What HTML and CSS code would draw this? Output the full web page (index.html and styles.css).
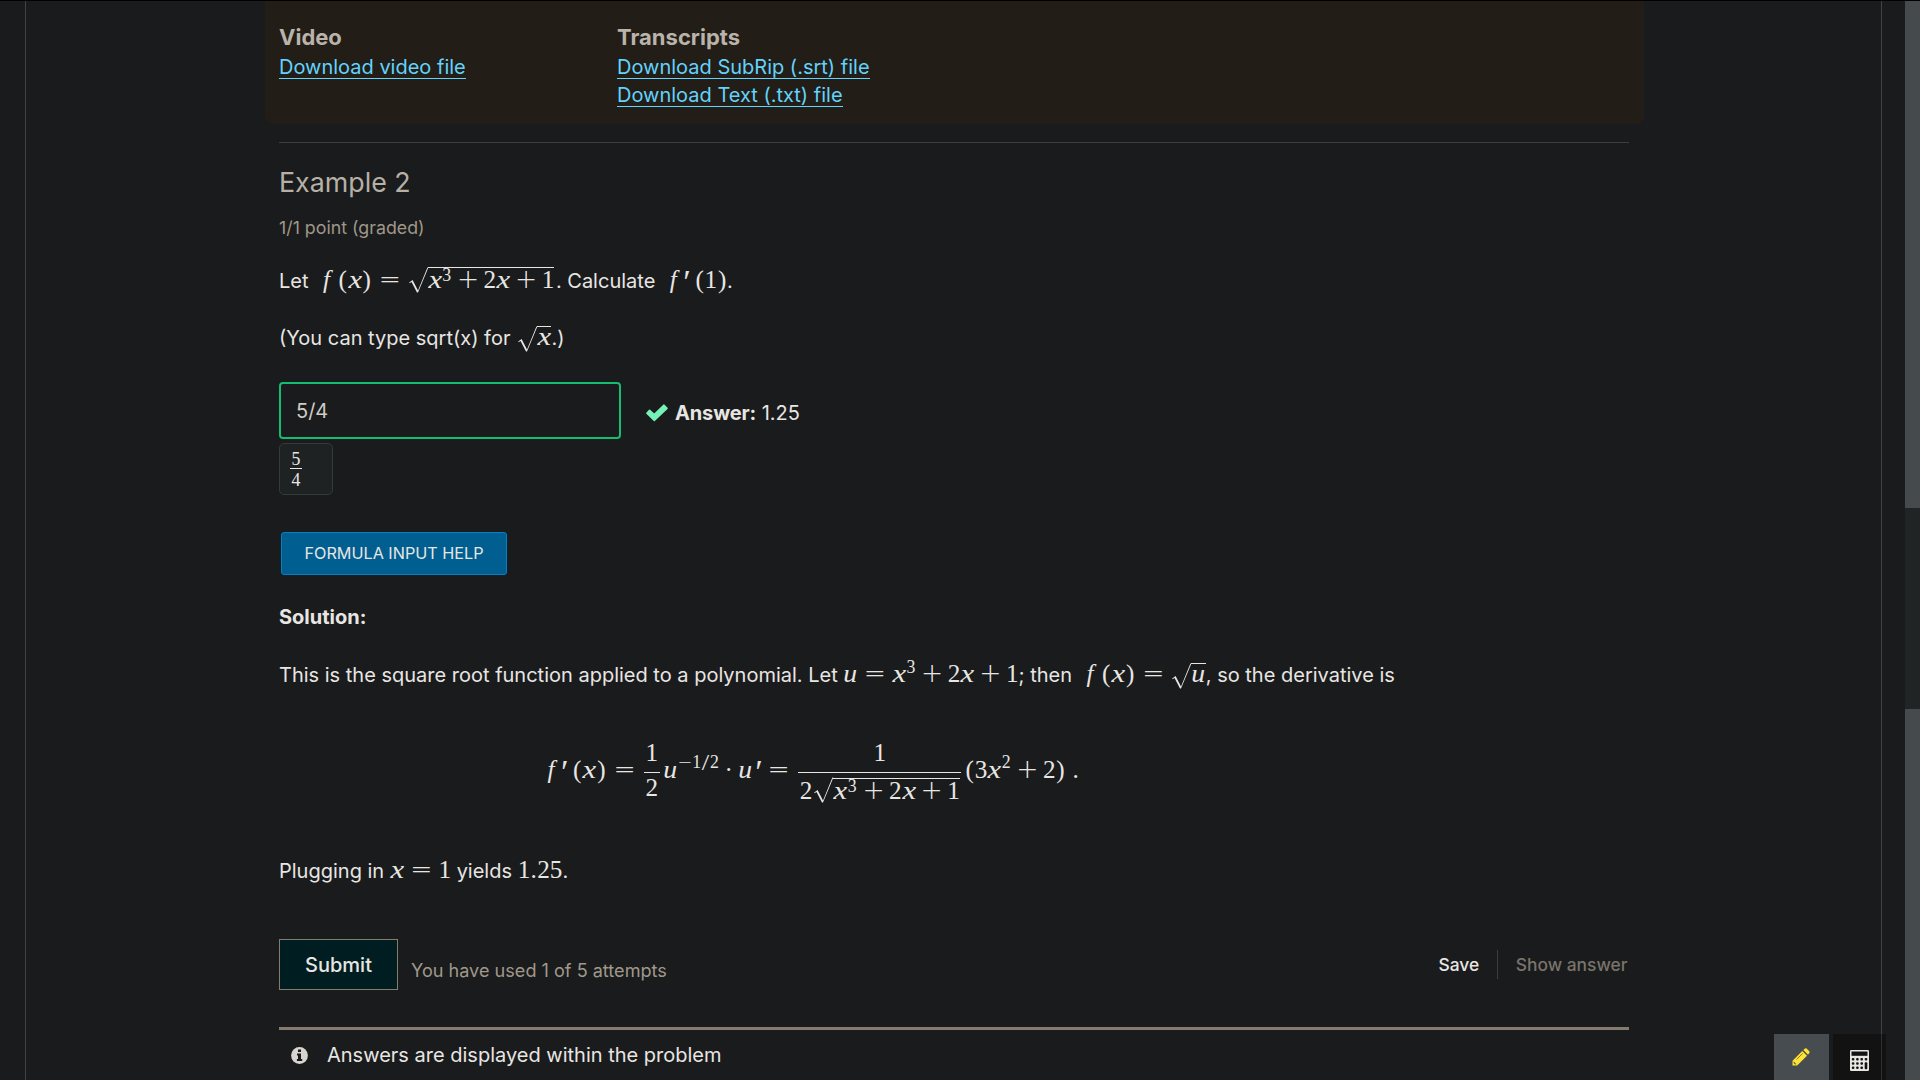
FILE: index.html
```html
<!DOCTYPE html>
<html lang="en">
<head>
<meta charset="utf-8">
<title>Example 2</title>
<link rel="stylesheet" href="styles.css">
</head>
<body>
<div class="viewport">
  <main class="page">
    <section class="downloads">
      <div class="download-group">
        <h3>Video</h3>
        <a href="#">Download video file</a>
      </div>
      <div class="download-group">
        <h3>Transcripts</h3>
        <a href="#">Download SubRip (.srt) file</a>
        <a href="#">Download Text (.txt) file</a>
      </div>
    </section>

    <section class="problem">
      <h2>Example 2</h2>
      <div class="progress">1/1 point (graded)</div>

      <p class="line statement">Let <span class="m lead trail"><i class="f">f</i><span class="par thin">(</span><i class="x">x</i><span class="par">)</span><span class="rel">=</span><svg class="surd" viewBox="0 0 21 26"><path d="M2.2 15.6 5.6 13 11 23.6 20.4.5H21.4L11 25.6H10L4.5 15 2.6 16.3Z"/></svg><span class="rad"><i class="x">x</i><sup>3</sup><span class="bin">+</span>2<i class="x">x</i><span class="bin">+</span>1</span></span>. Calculate <span class="m lead"><i class="f">f</i><span class="prime">′</span><span class="par thin">(</span>1<span class="par">)</span></span>.</p>

      <p class="line hint">(You can type sqrt(x) for <span class="m"><svg class="surd low" viewBox="0 0 21 26"><path d="M2.2 15.6 5.6 13 11 23.6 20.4.5H21.4L11 25.6H10L4.5 15 2.6 16.3Z"/></svg><span class="rad short"><i class="x">x</i></span></span>.)</p>

      <div class="answer-row">
        <div class="answer-input">5/4</div>
        <svg class="check" viewBox="0 0 22 17"><path d="M3.6 6.3 8.2 10.6 18 1.2 21 4.3 8.3 16.3.9 9.2Z"/></svg>
        <span class="answer"><b>Answer:</b> 1.25</span>
      </div>
      <div class="preview"><span class="m small-frac"><span>5</span><span>4</span></span></div>

      <button class="help">FORMULA INPUT HELP</button>

      <p class="line solution"><b>Solution:</b></p>
      <p class="line explain">This is the square root function applied to a polynomial. Let <span class="m"><i class="u">u</i><span class="rel">=</span><i class="x">x</i><sup class="high">3</sup><span class="bin">+</span>2<i class="x">x</i><span class="bin">+</span>1</span>; then <span class="m lead"><i class="f">f</i><span class="par thin">(</span><i class="x">x</i><span class="par">)</span><span class="rel">=</span><svg class="surd low" viewBox="0 0 21 26"><path d="M2.2 15.6 5.6 13 11 23.6 20.4.5H21.4L11 25.6H10L4.5 15 2.6 16.3Z"/></svg><span class="rad short"><i class="u">u</i></span></span>, so the derivative is</p>

      <div class="m display"><i class="f">f</i><span class="prime">′</span><span class="par thin">(</span><i class="x">x</i><span class="par">)</span><span class="rel">=</span><span class="frac"><span class="num">1</span><span class="den">2</span></span><i class="u">u</i><sup class="high"><span class="minus">−</span>1<span class="slash">/</span>2</sup><span class="dot">·</span><i class="u">u</i><span class="prime">′</span><span class="rel">=</span><span class="frac"><span class="num">1</span><span class="den root">2<svg class="surd" viewBox="0 0 21 26"><path d="M2.2 15.6 5.6 13 11 23.6 20.4.5H21.4L11 25.6H10L4.5 15 2.6 16.3Z"/></svg><span class="rad"><i class="x">x</i><sup>3</sup><span class="bin">+</span>2<i class="x">x</i><span class="bin">+</span>1</span></span></span><span class="par">(</span>3<i class="x">x</i><sup class="high">2</sup><span class="bin">+</span>2<span class="par">)</span><span class="stop">.</span></div>

      <p class="line result">Plugging in <span class="m"><i class="x">x</i><span class="rel">=</span>1</span> yields <span class="m">1<span class="point">.</span>25</span>.</p>

      <div class="actions">
        <button class="submit">Submit</button>
        <span class="attempts">You have used 1 of 5 attempts</span>
        <span class="save">Save</span>
        <span class="show">Show answer</span>
      </div>

      <div class="notice">
        <svg class="info" viewBox="0 0 17 17"><circle cx="8.5" cy="8.5" r="8.4"/><path d="M7 2.5H10V5H7ZM6 6.6H10V12H11.2V13.9H5.9V12H7V8.4H6Z"/></svg>
        <span>Answers are displayed within the problem</span>
      </div>
    </section>
  </main>
  <div class="scrollbar"><div class="thumb"></div></div>
</div>
<div class="tools">
  <div class="tool notes"><svg width="18" height="18" viewBox="0 0 18 18"><path fill="#fde334" d="M.5 17.5V12.8L10.3 3 15 7.7 5.2 17.5ZM11.3 2 13 .5Q13.8 0 14.6.6L17.3 3.3Q18 4.1 17.3 5L16 6.7Z"/><path fill="none" stroke="#7d7a3a" stroke-width="1" d="M4.6 11.4 10.6 5.4"/><path fill="#474c50" d="M1.6 13.6 4.4 16.2 3.4 16.6 1.6 14.9Z"/></svg></div>
  <div class="tool calc"><svg width="19" height="21" viewBox="0 0 19 21"><rect width="19" height="21" rx="1.3" fill="#e8e6e3"/><g fill="#111315"><rect x="1.5" y="1.5" width="16" height="4.3"/><rect x="1.8" y="8" width="2.6" height="2.6" rx="1"/><rect x="6.1" y="8" width="2.6" height="2.6" rx="1"/><rect x="10.4" y="8" width="2.6" height="2.6" rx="1"/><rect x="14.7" y="8" width="2.6" height="2.6" rx="1"/><rect x="1.8" y="12.2" width="2.6" height="2.6" rx="1"/><rect x="6.1" y="12.2" width="2.6" height="2.6" rx="1"/><rect x="10.4" y="12.2" width="2.6" height="2.6" rx="1"/><rect x="14.7" y="12.2" width="2.6" height="7" rx="1"/><rect x="1.8" y="16.5" width="2.6" height="2.6" rx="1"/><rect x="6.1" y="16.5" width="2.6" height="2.6" rx="1"/><rect x="10.4" y="16.5" width="2.6" height="2.6" rx="1"/></g></svg></div>
</div>
</body>
</html>
```
FILE: styles.css
```css
* { box-sizing: border-box; }
body {
  margin: 0;
  height: 1080px;
  overflow: hidden;
  background: #1a1b1c;
  color: #e8e6e3;
  font: 20px/30px Inter, "Liberation Sans", sans-serif;
}
h2, h3, p { margin: 0; }
button { font-family: inherit; color: inherit; padding: 0; }

.viewport {
  display: flex;
  height: 1080px;
  border-top: 1px solid #000;
}
.page {
  width: 1857px;
  margin-left: 25px;
  border: solid #414345;
  border-width: 0 1px;
}
.scrollbar {
  width: 15px;
  margin-left: auto;
  padding-top: 507px;
  background: #454a4d;
}
.thumb { height: 201px; background: #202425; }

/* Video downloads */
.downloads {
  display: flex;
  width: 1379px;
  height: 123px;
  margin-left: 239px;
  padding: 22px 14px 0;
  border-radius: 0 0 8px 8px;
  background: #221d17;
}
.download-group { width: 338px; }
.download-group h3 {
  height: 33px;
  font-size: 22px;
  line-height: 28px;
  color: #b9b3a9;
}
.download-group a {
  display: block;
  width: fit-content;
  height: 23px;
  margin-bottom: 5px;
  border-bottom: 1px solid #63d3fb;
  line-height: 22px;
  color: #63d3fb;
  text-decoration: none;
}

/* Problem */
.problem {
  display: flex;
  flex-direction: column;
  width: 1350px;
  margin: 18px 0 0 253px;
  border-top: 1px solid #3b3d3f;
}
.problem h2 {
  margin-top: 19px;
  height: 40px;
  font-size: 26.8px;
  line-height: 40px;
  font-weight: 400;
  color: #b6b0a6;
}
.progress {
  margin-top: 11px;
  font-size: 17.8px;
  height: 30px;
  color: #9f978a;
}
.line { height: 30px; white-space: nowrap; }
.statement { margin-top: 23px; }
.hint { margin-top: 27px; }

.answer-row {
  display: flex;
  height: 57px;
  margin-top: 29px;
}
.answer-input {
  width: 342px;
  border: 2px solid #14bd71;
  border-radius: 4px;
  padding: 12px 15px;
  color: #d0ccc6;
}
.check { width: 22px; height: 17px; margin: 22px 7px 0 25px; fill: #76f2b8; stroke: #76f2b8; stroke-width: 1.6; stroke-linejoin: round; overflow: visible; }
.answer { padding-top: 16px; }
.answer b { letter-spacing: -.15px; }
.preview {
  width: 54px;
  height: 52px;
  margin-top: 4px;
  padding: 6px 0 0 10px;
  border: 1px solid #34393a;
  border-radius: 5px;
  background: #1f2223;
}
.help {
  width: 226px;
  height: 43px;
  margin: 37px 0 0 2px;
  border: 1px solid #0080c9;
  border-radius: 3px;
  background: #005e91;
  padding-bottom: 2px;
  font-size: 16.2px;
  line-height: 38px;
  text-align: center;
}
.solution { margin-top: 27px; }
.explain { margin-top: 28px; }

/* Formulas */
.m {
  font: 25.2px/24px "Liberation Serif", "Times New Roman", serif;
  white-space: nowrap;
}
.line .m { line-height: 0; }
.m > span, .m > i, .rad > span, .rad > i { display: inline-block; }
.m i { text-align: center; }
.m .x, .m .u { width: .572em; transform: scaleX(1.22); }
.m .u { transform: scaleX(1.1); }
.m .f { width: .55em; text-align: center; }
.m .par { width: .389em; text-align: center; }
.m .thin { margin-left: .167em; }
.m .prime {
  width: 9.5px;
  font-size: 34px;
  font-style: italic;
  line-height: 0;
  text-align: center;
  vertical-align: -5px;
}
.m .prime + .thin { margin-left: .2em; }
.lead { margin-left: 5.5px; }
.trail { margin-right: 1.5px; }
.m .rel, .m .bin {
  width: 22.2px;
  font: 200 26.5px/0 "DejaVu Sans", sans-serif;
}
.m .rel { margin: 0 6px; }
.m .par + .rel { margin-left: 7px; }
.m .bin { margin: 0 4.5px; }
.m sup {
  display: inline-block;
  margin-right: .07em;
  font-size: 17.8px;
  line-height: 0;
  vertical-align: 7px;
}
.m sup.high { vertical-align: 9.5px; }
.minus { display: inline-block; font: 200 17.8px/0 "DejaVu Sans", sans-serif; width: .82em; }
.slash { display: inline-block; width: .5em; text-align: center; transform: scale(1.5, 1.25); }
.surd { width: 21px; height: 26px; vertical-align: -4.5px; fill: #e8e6e3; overflow: visible; }
.surd.low { vertical-align: -7px; }
.rad { display: inline-block; border-top: 1.3px solid #e8e6e3; line-height: 24px; }
.line .rad { line-height: 24px; }
.line .rad.short, .rad.short { line-height: 19px; }
.frac {
  flex-direction: column;
  align-items: center;
  vertical-align: 16.7px;
  margin: 0 .14em 0 .1em;
}
.m > .frac { display: inline-flex; }
.num { padding-bottom: 7px; line-height: 24px; }
.den { align-self: stretch; padding: 3px 1.5px 0; border-top: 1px solid #e8e6e3; text-align: center; }
.den.root { padding: 4px 1.5px 0; }
.m .dot { width: .278em; margin: 0 .25em 0 .17em; text-align: center; }
.m .stop { margin-left: .28em; }
.m .point { width: .278em; text-align: center; }
.display { height: 80px; margin: 51px 0 0 265px; }
.preview .small-frac {
  display: flex;
  flex-direction: column;
  width: 12px;
  font-size: 17.8px;
  text-align: center;
}
.small-frac span { line-height: 18px; }
.small-frac span:first-child { border-bottom: 1px solid #e8e6e3; }
.small-frac span:last-child { margin-top: 2px; }
.result { margin-top: 35px; }

/* Actions */
.actions {
  display: flex;
  height: 51px;
  margin-top: 53px;
}
.submit {
  width: 119px;
  border: 1px solid #857c6e;
  background: #001e21;
  font-size: 20px;
  font-weight: 500;
}
.attempts { margin: 16px auto 0 13px; font-size: 18.1px; line-height: 30px; color: #a0988b; }
.save, .show { height: 29px; margin-top: 11px; font-size: 17.4px; line-height: 29px; font-weight: 500; }
.save { padding-right: 18px; border-right: 1px solid #3c3e40; }
.show { padding: 0 1.5px 0 17.5px; color: #78746b; }

.notice {
  display: flex;
  align-items: center;
  gap: 19px;
  margin-top: 37px;
  padding: 10px 12px;
  border-top: 3px solid #857b6d;
}
.info { width: 17px; height: 17px; fill: #d8d4cf; }
.info path { fill: #1a1b1c; }

/* Floating course tools */
.tools {
  position: fixed;
  left: 1774px;
  bottom: 0;
  display: flex;
  gap: 4px;
  height: 46px;
}
.tool { display: flex; justify-content: center; }
.notes { width: 55px; padding: 14px 1px 0 0; background: #474c50; }
.calc { width: 53px; padding: 16px 1px 0 0; background: rgba(0, 0, 0, .3); }
```
